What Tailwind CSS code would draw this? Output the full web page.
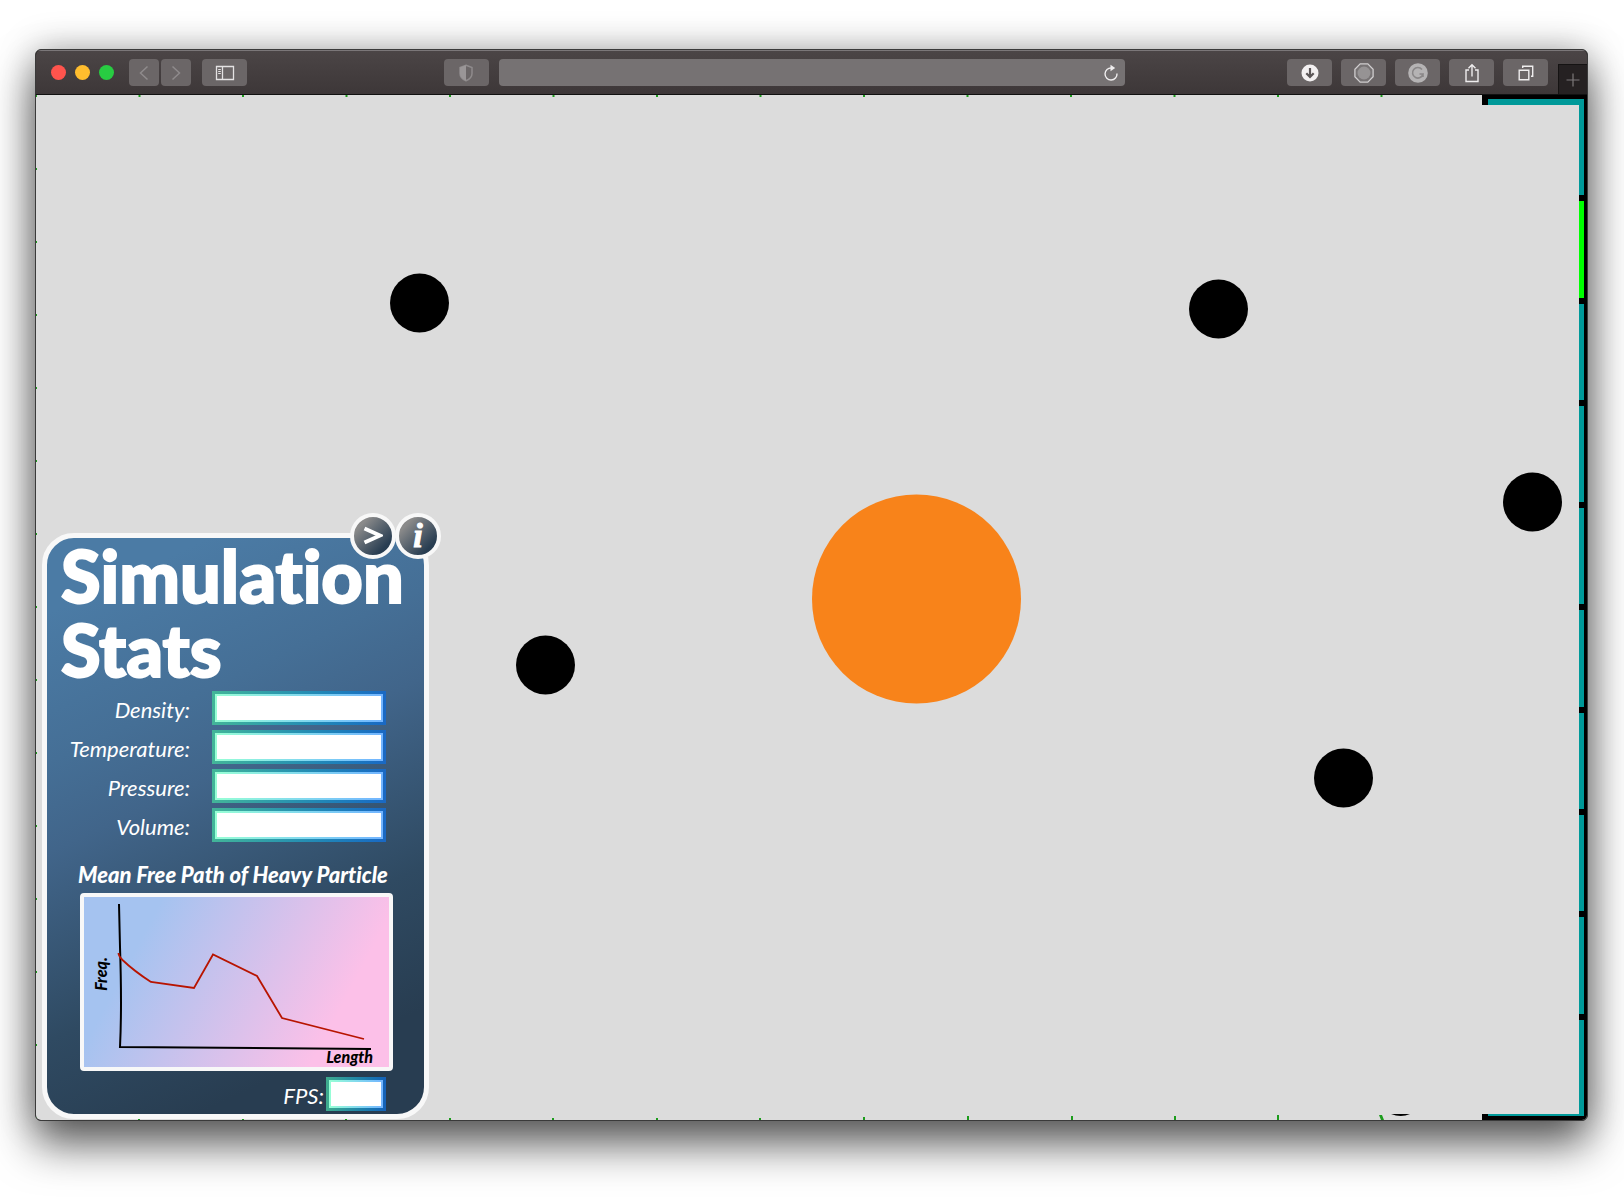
<!DOCTYPE html>
<html lang="en">
<head>
<meta charset="utf-8">
<title>Simulation Stats</title>
<script src="https://cdn.jsdelivr.net/npm/@tailwindcss/browser@4"></script>
</head>
<body class="flex min-h-screen bg-white pt-[49px] pr-[36px] pb-[76px] pl-[35px] font-[Lato,sans-serif] [font-variant-ligatures:none]">
<div class="flex flex-1 flex-col overflow-hidden rounded-[6px] border border-[#3a3a3a] bg-black shadow-[0_24px_44px_rgba(0,0,0,0.6),0_0_36px_rgba(0,0,0,0.28)]">

  <!-- Browser toolbar -->
  <header class="flex h-[45px] items-center border-t border-b border-t-[#7b7779] border-b-[#111] bg-linear-to-b from-[#4b4546] to-[#3d3738] pl-[15px]">
    <div class="flex gap-[9px]">
      <button aria-label="Close" class="size-[15px] rounded-full bg-[#ff544d]"></button>
      <button aria-label="Minimize" class="size-[15px] rounded-full bg-[#ffbd2e]"></button>
      <button aria-label="Zoom" class="size-[15px] rounded-full bg-[#28cc42]"></button>
    </div>
    <div class="ml-[15px] flex gap-[2px]">
      <button aria-label="Back" class="flex h-[27px] w-[30px] items-center justify-center rounded-[4px] bg-[#6b6667]">
        <svg width="10" height="16" viewBox="0 0 10 16" fill="none" stroke="#8f8b8c" stroke-width="1.5"><path d="M8.5 1.5 1.5 8l7 6.5"/></svg>
      </button>
      <button aria-label="Forward" class="flex h-[27px] w-[30px] items-center justify-center rounded-[4px] bg-[#6b6667]">
        <svg width="10" height="16" viewBox="0 0 10 16" fill="none" stroke="#8f8b8c" stroke-width="1.5"><path d="M1.5 1.5 8.5 8l-7 6.5"/></svg>
      </button>
    </div>
    <button aria-label="Show sidebar" class="ml-[11px] flex h-[27px] w-[45px] items-center justify-center rounded-[4px] bg-[#6b6667]">
      <svg width="20" height="16" viewBox="0 0 20 16" fill="none" stroke="#e4e2e3" stroke-width="1.3"><path d="M1.5 1.5h17v13h-17zM7.5 1.5v13"/><path d="M3.2 4.5h2.6M3.2 6.5h2.6M3.2 8.5h2.6" stroke-width="1"/></svg>
    </button>
    <div class="grow-[198] basis-0"></div>
    <button aria-label="Privacy report" class="flex h-[27px] w-[45px] items-center justify-center rounded-[4px] bg-[#6b6667]">
      <svg width="16" height="18" viewBox="0 0 16 18"><path d="M8 1.2 14 3.5v6c0 3.5-3 6-6 7.3-3-1.3-6-3.8-6-7.3v-6z" fill="none" stroke="#8f8b8c" stroke-width="1.5"/><path d="M8 1.2 2 3.5v6c0 3.5 3 6 6 7.3z" fill="#9a9697"/></svg>
    </button>
    <div class="ml-[10px] flex h-[27px] grow-[624] basis-0 items-center rounded-[4px] bg-[#767273] pr-[6px]">
      <input type="text" aria-label="Address" class="min-w-0 flex-1 bg-transparent px-2 text-sm text-white outline-none">
      <button aria-label="Reload">
        <svg width="16" height="18" viewBox="0 0 16 18" fill="none" stroke="#efedee" stroke-width="1.4"><path d="M8.5 4A6 6 0 1 0 14 9.5"/><path d="M7.5 .8 12.2 4 7.5 7.2z" fill="#efedee" stroke="none"/></svg>
      </button>
    </div>
    <div class="grow-[163] basis-0"></div>
    <div class="flex gap-[9px]">
      <button aria-label="Downloads" class="flex h-[27px] w-[45px] items-center justify-center rounded-[4px] bg-[#6b6667]">
        <svg width="18" height="18" viewBox="0 0 18 18"><circle cx="9" cy="9" r="8.5" fill="#f3f0f1"/><path d="M9 4v9M5.3 9.2 9 13l3.7-3.8" fill="none" stroke="#5b5657" stroke-width="2.2"/></svg>
      </button>
      <button aria-label="Content blocker" class="flex h-[27px] w-[45px] items-center justify-center rounded-[4px] bg-[#6b6667]">
        <svg width="20" height="20" viewBox="0 0 20 20"><path d="M6.2 .9h7.6l5.3 5.3v7.6l-5.3 5.3H6.2L.9 13.8V6.2z" fill="#777374" stroke="#cfcdce" stroke-width="1.3"/><circle cx="10" cy="10" r="6.5" fill="#969394"/></svg>
      </button>
      <button aria-label="Grammar check" class="flex h-[27px] w-[45px] items-center justify-center rounded-[4px] bg-[#6b6667]">
        <svg width="20" height="20" viewBox="0 0 20 20"><circle cx="10" cy="10" r="9.8" fill="#b5b3b4"/><path d="M14 6.5A5.3 5.3 0 1 0 15 11h-3.5M15 11v3" fill="none" stroke="#8a8788" stroke-width="1.6"/></svg>
      </button>
      <button aria-label="Share" class="flex h-[27px] w-[45px] items-center justify-center rounded-[4px] bg-[#6b6667]">
        <svg width="16" height="20" viewBox="0 0 16 20" fill="none" stroke="#efedee" stroke-width="1.4"><path d="M5 7H2v11.5h12V7h-3M8 13.5V2M4.5 5.2 8 1.7l3.5 3.5"/></svg>
      </button>
      <button aria-label="Show tabs" class="flex h-[27px] w-[45px] items-center justify-center rounded-[4px] bg-[#6b6667]">
        <svg width="16" height="16" viewBox="0 0 16 16" fill="none" stroke="#efedee" stroke-width="1.4"><path d="M1.2 5.2h9.6v9.6H1.2zM4.7 3V1.2h10v10H13"/></svg>
      </button>
    </div>
    <button aria-label="New tab" class="ml-[10px] flex h-[30px] w-[29px] items-center justify-center self-end border-t border-l border-[#151313] bg-[#252122]">
      <svg width="14" height="14" viewBox="0 0 14 14" stroke="#7c797a" stroke-width="1.2"><path d="M7 .5v13M.5 7h13"/></svg>
    </button>
  </header>

  <!-- Simulation page -->
  <main class="relative flex flex-1 items-end bg-[#dcdcdc] pl-[6px] pb-px">
    <!-- Grid markers along the edges -->
    <svg class="absolute inset-0 size-full" aria-hidden="true">
      <defs>
        <pattern id="cols" width="103.5" height="4" patternUnits="userSpaceOnUse"><rect x="102.5" width="1" height="2" fill="#1c9c1c"/><rect width="1" height="2" fill="#1c9c1c"/></pattern>
        <pattern id="rows" width="2" height="73" patternUnits="userSpaceOnUse"><rect width="1" height="2" fill="#1c9c1c"/></pattern>
      </defs>
      <rect width="100%" height="2" fill="url(#cols)"/>
      <rect width="1" height="100%" fill="url(#rows)"/>
      <svg y="100%" overflow="visible"><g fill="#1c9c1c"><path d="M102-2h2v2h-2zM206-2h2v2h-2zM309-2h2v2h-2zM413-2h2v2h-2zM516-2h2v2h-2zM620-2h2v2h-2zM723-2h2v2h-2z"/><path d="M827-3h2v3h-2zM931-4h2v4h-2zM1035-4h2v4h-2zM1138-4h2v4h-2zM1241-5h2v5h-2zM1343-5h3l2 5h-3z"/></g></svg>
    </svg>

    <!-- Tile column, mostly hidden under the canvas -->
    <div class="absolute inset-y-0 right-0 flex w-[105px] flex-col gap-[6px] bg-black py-[4px] pr-[3px] pl-[6px]">
      <div class="flex-1 bg-[#009999]"></div>
      <div class="flex-1 bg-[#00ff00]"></div>
      <div class="flex-1 bg-[#009999]"></div>
      <div class="flex-1 bg-[#009999]"></div>
      <div class="flex-1 bg-[#009999]"></div>
      <div class="flex-1 bg-[#009999]"></div>
      <div class="flex-1 bg-[#009999]"></div>
      <div class="flex-1 bg-[#009999]"></div>
      <div class="flex-1 bg-[#009999]"></div>
      <div class="flex-1 bg-[#009999]"></div>
    </div>

    <!-- Particle canvas -->
    <div class="absolute top-[10px] right-[8px] bottom-[6px] left-[1px] bg-[#dcdcdc]"></div>
    <svg class="absolute inset-0 size-full" role="img" aria-label="Gas particles around one heavy particle">
      <circle cx="383.5" cy="208" r="29.5"/>
      <circle cx="1182.5" cy="214" r="29.5"/>
      <circle cx="1496.5" cy="407" r="29.5"/>
      <circle cx="509.5" cy="570" r="29.5"/>
      <circle cx="1307.5" cy="683" r="29.5"/>
      <circle cx="880.5" cy="504" r="104.5" fill="#f8831a"/>
      <path d="M1355 1019q10 4 19 0z"/>
    </svg>

    <!-- Stats panel -->
    <section class="relative flex h-[586px] w-[387px] flex-col rounded-[32px] border-[5px] border-[#f8f8f8] bg-[linear-gradient(155deg,#4b7ba5_10%,#456f96_30%,#41658a_42%,#2f4a62_67%,#283d51_86%)] text-white">
      <div class="absolute -top-[25px] -right-[17px] flex">
        <button aria-label="Collapse panel" class="-mr-px flex size-[46px] items-center justify-center rounded-full border-4 border-[#f8f8f8] bg-linear-to-br from-[#8a8a8a] from-20% to-[#283d51] to-80%">
          <svg width="20" height="20" viewBox="0 0 20 20" fill="none" stroke="#fff" stroke-width="4"><path d="M1.5 2.5 17 9.5 1.5 16.5"/></svg>
        </button>
        <button aria-label="Information" class="flex size-[46px] items-center justify-center rounded-full border-4 border-[#f8f8f8] bg-linear-to-br from-[#8a8a8a] from-20% to-[#283d51] to-80% font-['Liberation_Serif',serif] text-[34px] leading-none font-bold italic [-webkit-text-stroke:1px_white]">i</button>
      </div>
      <h1 class="pl-[14px] text-[72px] leading-[74px] font-black [-webkit-text-stroke:2px_white]">Simulation<br>Stats</h1>
      <form class="mt-[5px] flex flex-col gap-[5px] pr-[38px] text-[22px] italic">
        <div class="flex h-[34px] items-center justify-end gap-[22px]"><label for="density" class="pt-[3px]">Density:</label><span class="h-[34px] w-[174px] bg-linear-to-r from-[#43b598] to-[#1a68c4] p-[3px]"><span class="flex size-full bg-linear-to-r from-[#98ffd5] to-[#72b4ff] p-[2px]"><input id="density" type="text" class="w-full bg-white px-2 text-black outline-none"></span></span></div>
        <div class="flex h-[34px] items-center justify-end gap-[22px]"><label for="temperature" class="pt-[3px]">Temperature:</label><span class="h-[34px] w-[174px] bg-linear-to-r from-[#43b598] to-[#1a68c4] p-[3px]"><span class="flex size-full bg-linear-to-r from-[#98ffd5] to-[#72b4ff] p-[2px]"><input id="temperature" type="text" class="w-full bg-white px-2 text-black outline-none"></span></span></div>
        <div class="flex h-[34px] items-center justify-end gap-[22px]"><label for="pressure" class="pt-[3px]">Pressure:</label><span class="h-[34px] w-[174px] bg-linear-to-r from-[#43b598] to-[#1a68c4] p-[3px]"><span class="flex size-full bg-linear-to-r from-[#98ffd5] to-[#72b4ff] p-[2px]"><input id="pressure" type="text" class="w-full bg-white px-2 text-black outline-none"></span></span></div>
        <div class="flex h-[34px] items-center justify-end gap-[22px]"><label for="volume" class="pt-[3px]">Volume:</label><span class="h-[34px] w-[174px] bg-linear-to-r from-[#43b598] to-[#1a68c4] p-[3px]"><span class="flex size-full bg-linear-to-r from-[#98ffd5] to-[#72b4ff] p-[2px]"><input id="volume" type="text" class="w-full bg-white px-2 text-black outline-none"></span></span></div>
      </form>
      <h2 class="mt-[19px] pl-[31px] text-[22px] leading-[28px] font-black whitespace-nowrap italic">Mean Free Path of Heavy Particle</h2>
      <div class="mt-[4px] ml-[33px] h-[178px] w-[313px] rounded-[4px] border-4 border-[#f8f8f8] bg-[linear-gradient(118deg,#a5c3f0_20%,#fcc0e8_80%)]">
        <svg class="size-full" viewBox="0 0 305 170" fill="none" stroke-width="2" role="img" aria-label="Frequency by path length">
          <path d="M35 7 36 50Q38 110 36 150L287 152" stroke="#000"/>
          <path d="M34.5 56q0 3 4 7Q50 74 67 85l43 6 19-33.5L173 79l25 42 82 21" stroke="#b81400" stroke-width="1.8"/>
          <g fill="#000" font-size="16" font-weight="900" font-style="italic">
            <text x="289" y="166" text-anchor="end">Length</text>
            <text transform="translate(23 77) rotate(-90)" text-anchor="middle">Freq.</text>
          </g>
        </svg>
      </div>
      <div class="mt-[6px] flex h-[34px] items-center justify-end gap-[2px] pr-[38px] text-[22px] italic"><label for="fps" class="pt-[3px]">FPS:</label><span class="h-[34px] w-[60px] bg-linear-to-r from-[#3fab8c] to-[#1560b8] p-[3px]"><span class="flex size-full bg-linear-to-r from-[#98ffd5] to-[#72b4ff] p-[2px]"><input id="fps" type="text" class="w-full bg-white px-1 text-black outline-none"></span></span></div>
    </section>
  </main>
</div>
</body>
</html>
